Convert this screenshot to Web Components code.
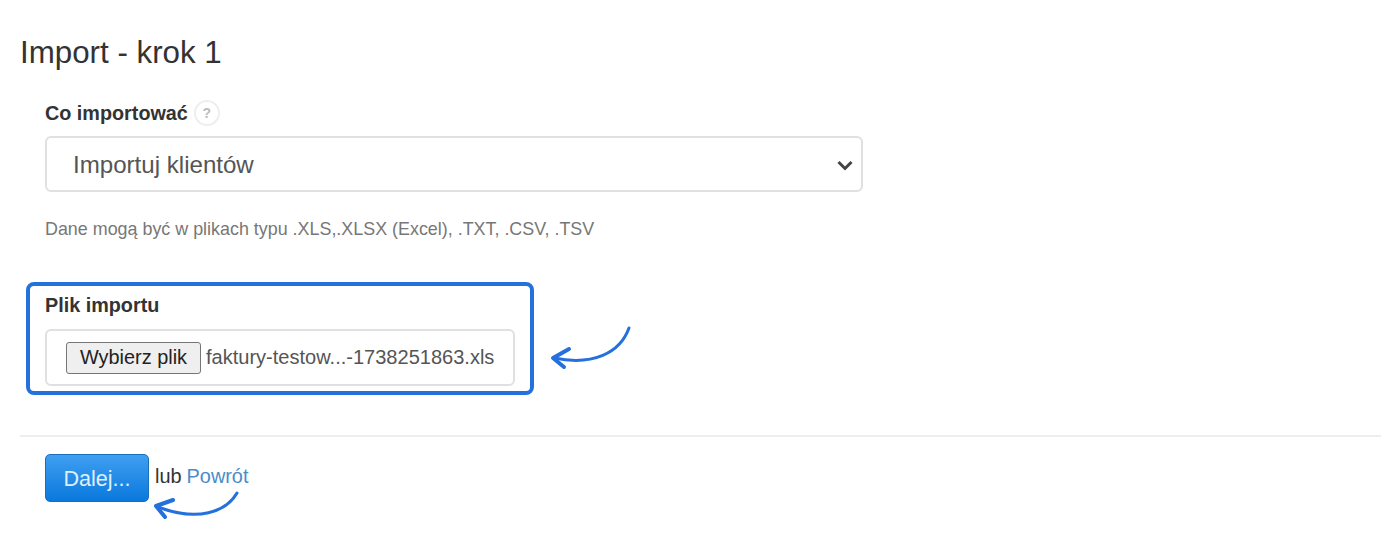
<!DOCTYPE html>
<html lang="pl">
<head>
<meta charset="utf-8">
<title>Import - krok 1</title>
<style>
    html, body { margin: 0; background: #fff; }
    body { font-family: "Liberation Sans", Arial, sans-serif; color: #333; }
</style>
</head>
<body>
<import-page heading="Import - krok 1">
    <field-group label="Co importować" help>
        <select-box>Importuj klientów</select-box>
        <p slot="hint">Dane mogą być w plikach typu .XLS,.XLSX (Excel), .TXT, .CSV, .TSV</p>
    </field-group>
    <file-group label="Plik importu" button="Wybierz plik" file="faktury-testow...-1738251863.xls"></file-group>
    <form-actions submit="Dalej..." link="Powrót"></form-actions>
</import-page>

<script>
class importPage extends HTMLElement {
    constructor() {
        super();
        this.shadow = this.attachShadow({ mode: "open" });
    }

    connectedCallback() {
        this.shadow.innerHTML = `
            <style>
                :host { display: block; padding: 36px 2px 34px 20px; }
                h1 {
                    margin: 0 0 31px;
                    font-size: 31.3px;
                    line-height: 33px;
                    font-weight: 400;
                    color: #333;
                }
            </style>
            <h1>${this.getAttribute("heading")}</h1>
            <slot></slot>
        `;
    }
}

class fieldGroup extends HTMLElement {
    constructor() {
        super();
        this.shadow = this.attachShadow({ mode: "open" });
    }

    connectedCallback() {
        this.shadow.innerHTML = `
            <style>
                :host { display: block; padding-left: 25px; width: 818px; }
                .label {
                    display: flex;
                    align-items: center;
                    gap: 6px;
                    height: 26px;
                    margin-bottom: 10px;
                    font-size: 19.8px;
                    font-weight: 700;
                    color: #333;
                }
                .help {
                    width: 26px;
                    height: 26px;
                    box-sizing: border-box;
                    border: 2px solid #eee;
                    border-radius: 50%;
                    display: flex;
                    align-items: center;
                    justify-content: center;
                    font-size: 14px;
                    color: #bbb;
                }
                ::slotted(p) {
                    margin: 27px 0 0;
                    font-size: 17.9px;
                    line-height: 20px;
                    color: #777;
                }
            </style>
            <div class="label">${this.getAttribute("label")}<span class="help">?</span></div>
            <slot></slot>
            <slot name="hint"></slot>
        `;
    }
}

class selectBox extends HTMLElement {
    constructor() {
        super();
        this.shadow = this.attachShadow({ mode: "open" });
    }

    connectedCallback() {
        this.shadow.innerHTML = `
            <style>
                :host {
                    display: flex;
                    align-items: center;
                    justify-content: space-between;
                    box-sizing: border-box;
                    height: 56px;
                    padding: 1px 8px 0 26px;
                    border: 2px solid #e0e0e0;
                    border-radius: 6px;
                    font-size: 24.1px;
                    color: #555;
                }
                svg { display: block; }
            </style>
            <slot></slot>
            <svg width="16" height="12" viewBox="0 0 16 12"><path d="M1.5 3l6.5 6.5 6.5-6.5" fill="none" stroke="#444" stroke-width="3"/></svg>
        `;
    }
}

class fileGroup extends HTMLElement {
    constructor() {
        super();
        this.shadow = this.attachShadow({ mode: "open" });
    }

    connectedCallback() {
        this.shadow.innerHTML = `
            <style>
                :host {
                    display: block;
                    position: relative;
                    box-sizing: border-box;
                    width: 508px;
                    height: 113px;
                    margin: 43px 0 40px 6px;
                    padding: 6px 15px 0 15px;
                    border: 4px solid #2470dc;
                    border-radius: 8px;
                }
                .label {
                    height: 26px;
                    line-height: 26px;
                    margin-bottom: 11px;
                    font-size: 19.8px;
                    font-weight: 700;
                    color: #333;
                }
                .input {
                    display: flex;
                    align-items: center;
                    box-sizing: border-box;
                    width: 470px;
                    height: 57px;
                    padding-left: 19px;
                    border: 2px solid #e0e0e0;
                    border-radius: 6px;
                    font-size: 19.9px;
                    color: #555;
                }
                .file { font-size: 20.05px; }
                .btn {
                    display: flex;
                    align-items: center;
                    justify-content: center;
                    box-sizing: border-box;
                    width: 135px;
                    height: 32px;
                    margin-right: 5px;
                    background: #efefef;
                    border: 1px solid #767676;
                    border-radius: 3px;
                    color: #222;
                }
                svg { position: absolute; left: 518px; top: 37px; }
            </style>
            <div class="label">${this.getAttribute("label")}</div>
            <div class="input">
                <span class="btn">${this.getAttribute("button")}</span>
                <span class="file">${this.getAttribute("file")}</span>
            </div>
            <svg width="86" height="50" viewBox="0 0 86 50" fill="none" stroke="#2470dc" stroke-linecap="round" stroke-linejoin="round">
                <path d="M81 5C72 30 45 43 6 35" stroke-width="3"/>
                <path d="M21 26L5 35L16 44" stroke-width="4"/>
            </svg>
        `;
    }
}

class formActions extends HTMLElement {
    constructor() {
        super();
        this.shadow = this.attachShadow({ mode: "open" });
    }

    connectedCallback() {
        this.shadow.innerHTML = `
            <style>
                :host {
                    display: flex;
                    position: relative;
                    align-items: center;
                    padding: 17px 0 0 25px;
                    border-top: 2px solid #eee;
                    font-size: 19.9px;
                    color: #333;
                }
                .btn {
                    display: flex;
                    align-items: center;
                    justify-content: center;
                    box-sizing: border-box;
                    width: 104px;
                    height: 48px;
                    padding-top: 2px;
                    margin-right: 6px;
                    background: linear-gradient(#3f9ff2, #0a78dc);
                    border: 1px solid #1a6fbd;
                    border-radius: 5px;
                    color: #e0effc;
                    font-size: 21.6px;
                }
                a { color: #4a8cc9; text-decoration: none; margin-left: 5px; }
                .links { position: relative; top: -2px; }
                svg { position: absolute; left: 128px; top: 53px; }
            </style>
            <span class="btn">${this.getAttribute("submit")}</span>
            <span class="links">lub<a href="#">${this.getAttribute("link")}</a></span>
            <svg width="96" height="34" viewBox="0 0 96 34" fill="none" stroke="#2470dc" stroke-linecap="round" stroke-linejoin="round">
                <path d="M89 3C78 22 50 32 10 17" stroke-width="3"/>
                <path d="M25 10L8 16L17 27" stroke-width="4"/>
            </svg>
        `;
    }
}

customElements.define("import-page", importPage);
customElements.define("field-group", fieldGroup);
customElements.define("select-box", selectBox);
customElements.define("file-group", fileGroup);
customElements.define("form-actions", formActions);
</script>
</body>
</html>
